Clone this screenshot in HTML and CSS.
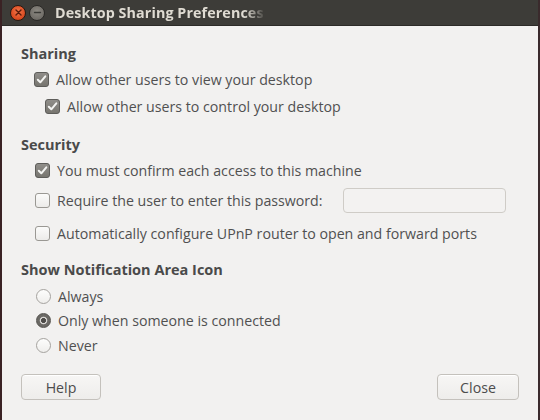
FILE: index.html
```html
<!DOCTYPE html>
<html>
<head>
<meta charset="utf-8">
<link rel="stylesheet" href="styles.css">
</head>
<body>
<div class="window">
  <div class="titlebar">
    <span class="wbtn close"><svg width="9" height="9" viewBox="0 0 9 9"><path d="M2 2L7 7M7 2L2 7" stroke="#5a1a0a" stroke-width="1.4" stroke-linecap="round"/></svg></span>
    <span class="wbtn min"><svg width="9" height="9" viewBox="0 0 9 9"><path d="M1.5 4.5H7.5" stroke="#3a3a36" stroke-width="1.4" stroke-linecap="round"/></svg></span>
    <span class="title">Desktop Sharing Preferences</span>
  </div>
  <div class="content">
    <div class="heading">Sharing</div>
    <div class="row r-s1"><span class="cb checked"></span><span>Allow other users to view your desktop</span></div>
    <div class="row r-s2 indent"><span class="cb checked"></span><span>Allow other users to control your desktop</span></div>

    <div class="heading h-sec">Security</div>
    <div class="row r-c1"><span class="cb checked"></span><span>You must confirm each access to this machine</span></div>
    <div class="row r-c2"><span class="cb"></span><span>Require the user to enter this password:</span><span class="entry"></span></div>
    <div class="row r-c3"><span class="cb"></span><span>Automatically configure UPnP router to open and forward ports</span></div>

    <div class="heading h-notif">Show Notification Area Icon</div>
    <div class="row r-r1"><span class="radio"></span><span>Always</span></div>
    <div class="row r-r2"><span class="radio on"></span><span>Only when someone is connected</span></div>
    <div class="row r-r3"><span class="radio"></span><span>Never</span></div>

    <div class="buttons">
      <span class="button help">Help</span>
      <span class="button closebtn">Close</span>
    </div>
  </div>
</div>
</body>
</html>
```
FILE: styles.css
```css
* { box-sizing: border-box; }
html, body { margin: 0; padding: 0; }
body {
  width: 540px;
  height: 420px;
  overflow: hidden;
  background: #f2f1f0;
  font-family: "Open Sans", "Noto Sans", sans-serif;
}
.window {
  width: 540px;
  height: 420px;
  background: #f2f1f0;
  border-left: 2px solid #3a2224;
  border-right: 2px solid #3a2a2c;
  display: flex;
  flex-direction: column;
}
.titlebar {
  height: 26px;
  background: #3d3c38;
  border-bottom: 1px solid #2c2b28;
  display: flex;
  align-items: center;
  padding-left: 8px;
}
.wbtn {
  width: 16px;
  height: 16px;
  border-radius: 50%;
  display: flex;
  align-items: center;
  justify-content: center;
  margin-right: 3px;
}
.wbtn.close {
  background: radial-gradient(circle at 50% 40%, #f2764a, #d9481e 70%, #b8391a);
  border: 1px solid #2a1a12;
}
.wbtn.min {
  background: radial-gradient(circle at 50% 40%, #8d8a83, #6f6c66 70%, #5d5a55);
  border: 1px solid #2a2926;
}
.title {
  margin-left: 7px;
  color: #dfdbd2;
  font-weight: bold;
  font-size: 14.3px;
  letter-spacing: 0.1px;
  white-space: nowrap;
  overflow: hidden;
  width: 211px;
  -webkit-mask-image: linear-gradient(to right, #000 90%, transparent 100%);
  mask-image: linear-gradient(to right, #000 90%, transparent 100%);
}
.content {
  padding: 18px 19px 0 19px;
  display: flex;
  flex-direction: column;
  color: #505050;
  font-size: 14.2px;
}
.heading {
  height: 20px;
  line-height: 20px;
  font-weight: bold;
  color: #4a4a4a;
  font-size: 14.5px;
}
.row {
  display: flex;
  align-items: center;
  height: 22px;
  padding-left: 13px;
  white-space: nowrap;
}
.row.indent { padding-left: 24px; }
.r-s1 { margin-top: 4px; }
.r-s2 { margin-top: 5px; }
.h-sec { margin-top: 18px; }
.r-c1 { margin-top: 4px; padding-left: 14px; }
.r-c2 { margin-top: 7px; height: 25px; padding-left: 14px; }
.r-c3 { margin-top: 9px; padding-left: 14px; }
.h-notif { margin-top: 16px; }
.r-r1 { margin-top: 5px; padding-left: 15px; }
.r-r2 { margin-top: 2px; padding-left: 15px; }
.r-r3 { margin-top: 3px; padding-left: 15px; }

.cb {
  width: 15px;
  height: 15px;
  border: 1px solid #9a9893;
  border-radius: 3px;
  background: linear-gradient(#fbfbfa, #ecebe9);
  margin-right: 7px;
  flex: none;
}
.cb.checked {
  border-color: #5e5d5a;
  background-color: #858380;
  background-image: url("data:image/svg+xml,%3Csvg xmlns='http://www.w3.org/2000/svg' width='13' height='13' viewBox='0 0 13 13'%3E%3Cpath d='M2.8 6.8L5.3 9.3L10.3 3.3' fill='none' stroke='%23f4f4f2' stroke-width='2' stroke-linecap='round' stroke-linejoin='round'/%3E%3C/svg%3E"), linear-gradient(#908e8a, #77756f);
  background-repeat: no-repeat;
  background-position: center;
}
.radio {
  width: 15px;
  height: 15px;
  border: 1px solid #a5a39f;
  border-radius: 50%;
  background: linear-gradient(#fdfdfc, #efeeec);
  margin-right: 7px;
  flex: none;
}
.radio.on {
  border-color: #55534f;
  background: radial-gradient(circle, #4e4c49 0 2.2px, #d8d6d3 2.8px 3.4px, #6b6965 4.2px);
}
.entry {
  margin-left: 20px;
  width: 163px;
  height: 25px;
  border: 1px solid #cfccc7;
  border-radius: 4px;
  background: #f3f2f1;
}
.buttons {
  margin-top: 18px;
  display: flex;
  justify-content: space-between;
}
.button {
  height: 26px;
  border: 1px solid #c4c1bc;
  border-radius: 4px;
  background: linear-gradient(#f7f6f5, #eeedeb);
  box-shadow: inset 0 1px 0 #ffffff;
  display: flex;
  align-items: center;
  justify-content: center;
  color: #4c4c4c;
  font-size: 14.2px;
}
.help { width: 80px; }
.closebtn { width: 82px; }
```
